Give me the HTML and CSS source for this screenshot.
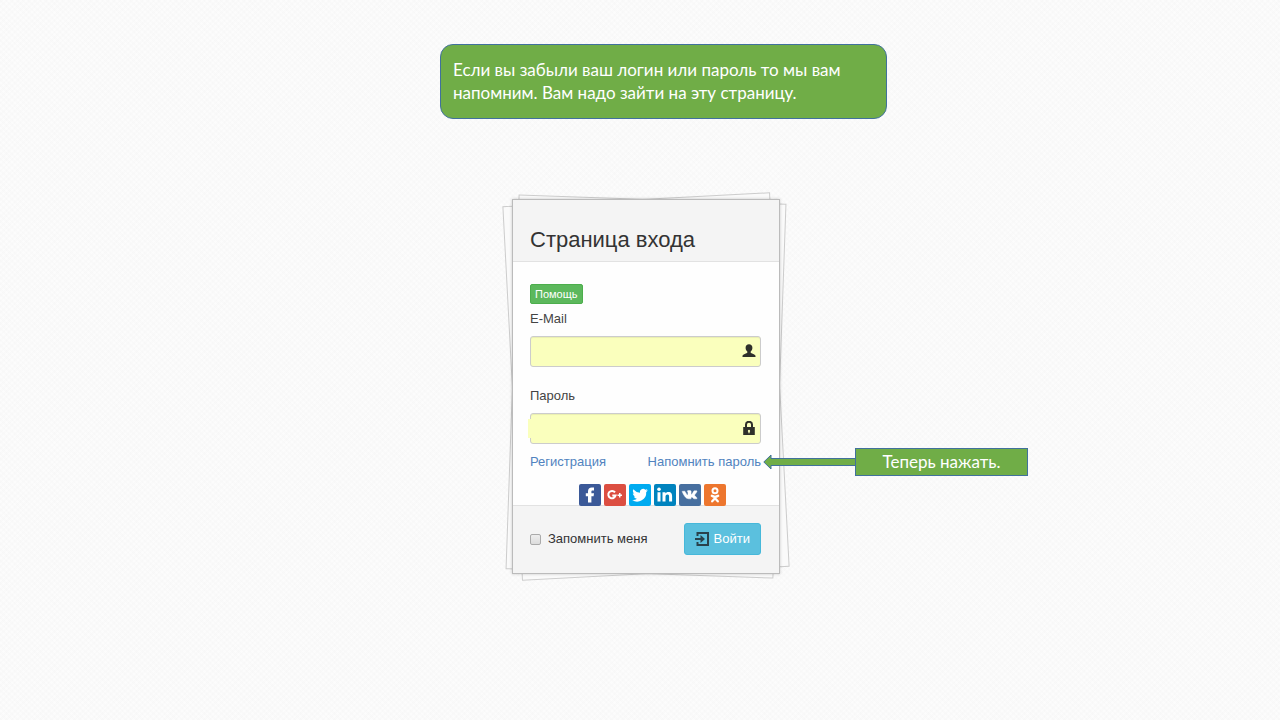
FILE: index.html
```html
<!DOCTYPE html>
<html lang="ru">
<head>
<meta charset="utf-8">
<meta name="viewport" content="width=device-width, initial-scale=1">
<title>Страница входа</title>
<link rel="stylesheet" href="styles.css">
</head>
<body>
<main class="page">
  <p class="note">Если вы забыли ваш логин или пароль то мы вам напомним. Вам надо зайти на эту страницу.</p>
  <div class="stack">
    <form class="card">
      <header class="card-header"><h1 class="title">Страница входа</h1></header>
      <div class="card-body">
        <button type="button" class="help">Помощь</button>
        <label class="label" for="email">E-Mail</label>
        <div class="field">
          <input class="input" id="email" type="email">
          <svg class="field-icon" viewBox="0 0 14 14"><path fill="#2f302b" d="M7 .3C4.900.3 3.600 1.600 3.600 3.700c0 1.600.7 3 1.700 3.700v1.400C4.900 9.700.9 10 .5 11.800V13h13v-1.200c-.4-1.800-4.400-2.100-4.800-3V7.400c1-.7 1.700-2.100 1.700-3.700C10.400 1.600 9.100.3 7 .3z"/></svg>
        </div>
        <label class="label" for="password">Пароль</label>
        <div class="field field-marked">
          <input class="input" id="password" type="password">
          <svg class="field-icon" viewBox="0 0 14 14"><path fill="none" stroke="#2f302b" stroke-width="2" d="M4 7V3.600a3 2.800 0 0 1 6 0V7"/><path fill="#2f302b" fill-rule="evenodd" d="M1.200 6h11.600v8H1.200zM7 8.800a1.200 1.200 0 0 0-.6 2.200v1.200h1.200V11A1.200 1.200 0 0 0 7 8.800z"/></svg>
        </div>
        <div class="links">
          <a class="link" href="#">Регистрация</a>
          <span class="remind">
            <a class="link" href="#">Напомнить пароль</a>
            <span class="pointer">
              <svg class="arrow" viewBox="0 0 93 16"><path fill="#70ad47" stroke="#41719c" d="M.8 8 8 1v3.500h85v7H8V15z"/></svg>
              <span class="hint">Теперь нажать.</span>
            </span>
          </span>
        </div>
        <nav class="social">
          <a class="social-link facebook" href="#" aria-label="Facebook"><svg class="social-icon" viewBox="0 0 22 22"><path fill="#fff" d="M9 18.500V12.200H6.800V9.200H9V7.300c0-2.500 1.400-3.900 3.800-3.900h2.200v3h-1.300c-1 0-1.300.4-1.300 1.200v1.600h2.600l-.4 3h-2.200v6.300z"/></svg></a>
          <a class="social-link google" href="#" aria-label="Google+"><svg class="social-icon" viewBox="0 0 22 22"><path fill="none" stroke="#fff" stroke-width="2" d="M11 8.400A3.700 3.700 0 1 0 11.600 11.600H8.300"/><path fill="#fff" d="M15 9h1.500v1.500H18V12h-1.500v1.500H15V12h-1.500v-1.500H15z"/></svg></a>
          <a class="social-link twitter" href="#" aria-label="Twitter"><svg class="social-icon" viewBox="0 0 24 24"><path fill="#fff" d="M20.500 6.800c-.6.300-1.300.5-2 .6.700-.4 1.300-1.100 1.500-1.900-.7.400-1.400.7-2.200.8A3.500 3.500 0 0 0 11.900 9.500 9.900 9.900 0 0 1 4.700 5.800c-.9 1.600-.5 3.600 1.100 4.700-.6 0-1.100-.2-1.600-.4 0 1.700 1.200 3.100 2.800 3.400-.5.100-1 .2-1.600.1.500 1.400 1.700 2.400 3.300 2.400A7 7 0 0 1 3.500 17.500 9.900 9.900 0 0 0 18.800 8.600c.7-.5 1.300-1.100 1.700-1.800z"/></svg></a>
          <a class="social-link linkedin" href="#" aria-label="LinkedIn"><svg class="social-icon" viewBox="0 0 22 22"><path fill="#fff" d="M3.500 8.300h3v9.200h-3zM8.500 8.300h2.900v1.300c.6-1 1.600-1.500 3-1.500 3 0 3.700 2 3.700 4.500v4.900h-3v-4.500c0-1.200-.1-2.400-1.600-2.400s-2 1.100-2 2.400v4.500h-3z"/><circle cx="5" cy="5.300" r="1.800" fill="#fff"/></svg></a>
          <a class="social-link vk" href="#" aria-label="ВКонтакте"><svg class="social-icon" viewBox="-3 -3 30 30"><path fill="#fff" stroke="#fff" stroke-width=".6" d="M11.500 17.200h1.300s.4 0 .6-.3c.2-.2.200-.5.200-.5s0-1.500.7-1.700 1.600 1.500 2.600 2.100c.7.500 1.300.4 1.300.4h2.500s1.300-.1.700-1.200c-.1-.1-.4-.8-2-2.300-1.700-1.500-1.500-1.300.6-4 1.200-1.700 1.700-2.700 1.600-3.100-.2-.4-1.100-.3-1.100-.3h-2.800s-.3 0-.5.200-.3.400-.3.400-.5 1.200-1.100 2.200c-1.200 2.100-1.700 2.200-1.900 2-.5-.3-.4-1.200-.4-1.900 0-2.100.3-2.900-.6-3.100-1.500-.4-3.800-.3-4.500.3-.4.200-.6.600-.4.600s.7.200.9.500c.3.500.3 1.500.3 1.500s.2 2.800-.4 3.100c-.4.200-1-.2-2.200-2.400-.6-1-1.100-2.200-1.100-2.200s-.1-.3-.3-.4c-.2-.2-.6-.2-.6-.2H1.900s-.4 0-.5.200c-.2.200 0 .5 0 .5s2.100 5 4.500 7.400c2.100 2.400 4.500 2.200 5.600 2.200z"/></svg></a>
          <a class="social-link odnoklassniki" href="#" aria-label="Одноклассники"><svg class="social-icon" viewBox="0 0 22 22"><circle cx="11" cy="6.800" r="2.500" fill="none" stroke="#fff" stroke-width="2"/><path fill="none" stroke="#fff" stroke-width="2.300" stroke-linecap="round" stroke-linejoin="round" d="M7.800 11.800c2.100 1.300 4.300 1.300 6.400 0M8.200 17.300l2.800-3 2.800 3M11 13v1"/></svg></a>
        </nav>
      </div>
      <footer class="card-footer">
        <label class="remember"><input class="tick" type="checkbox">Запомнить меня</label>
        <button type="button" class="submit">
          <svg class="submit-icon" viewBox="0 0 14 14"><path fill="none" stroke="#29424c" stroke-width="2" d="M2.500 4V1H13v12H2.500v-3M0 7h7"/><path fill="#29424c" d="M5.500 3 10 7l-4.500 4z"/></svg>Войти
        </button>
      </footer>
    </form>
  </div>
</main>
</body>
</html>
```
FILE: styles.css
```css
* { box-sizing: border-box; }

body {
  margin: 0;
  min-height: 100vh;
  background-color: #fcfcfc;
  background-image:
    repeating-linear-gradient(45deg, #f3f3f340 0 2px, transparent 2px 4px),
    repeating-linear-gradient(-45deg, #f3f3f340 0 2px, transparent 2px 4px);
  color: #333;
  font: 13px/18px "Liberation Sans", Arial, sans-serif;
}

.page {
  display: flex;
  flex-direction: column;
  align-items: center;
  gap: 80px;
  padding: 44px 0 40px 12px;
}

.note {
  width: 447px;
  max-width: 100%;
  margin: 0 0 0 35px;
  padding: 13px 12px 14px;
  border: 1px solid #41719c;
  border-radius: 13px;
  background: #70ad47;
  color: #fff;
  font: 17px/23px Lato, "Open Sans", sans-serif;
}

.stack {
  position: relative;
  width: 268px;
}

.stack::before,
.stack::after {
  content: "";
  position: absolute;
  inset: 0;
  border: 1px solid #ccc;
  background: #fafafa;
}

.stack::before { transform: rotate(-3deg); }
.stack::after { transform: rotate(2deg); }

.card {
  position: relative;
  z-index: 1;
  border: 1px solid #bbb;
  background: #fefefe;
  box-shadow: 0 0 3px #0003;
}

.card-header {
  padding: 26px 17px 7px;
  border-bottom: 1px solid #e2e2e2;
  background: #f4f4f4;
}

.title {
  margin: 0;
  font-size: 22px;
  font-weight: 400;
  line-height: 28px;
}

.card-body {
  display: flex;
  flex-direction: column;
  padding: 22px 18px 0 17px;
}

.help {
  align-self: flex-start;
  height: 20px;
  margin-bottom: 6px;
  padding: 0 4px;
  border: 1px solid #4cae4c;
  border-radius: 2px;
  background: #5cb85c;
  color: #fff;
  font: 11px/16px "Liberation Sans", Arial, sans-serif;
}

.label {
  margin-bottom: 8px;
  color: #444;
}

.field {
  position: relative;
  height: 31px;
  margin-bottom: 20px;
}

.field-marked { margin-bottom: 9px; }

.field-marked::before {
  content: "";
  position: absolute;
  inset: 6px auto 6px -2px;
  width: 6px;
  background: #faffbd;
}

.input {
  width: 100%;
  height: 100%;
  padding: 0 28px 0 8px;
  border: 1px solid #ccc;
  border-radius: 3px;
  background: #faffbd;
  box-shadow: inset 0 1px 1px #0001;
}

.field-icon {
  position: absolute;
  top: 8px;
  right: 5px;
  width: 14px;
  height: 14px;
}

.links {
  display: flex;
  justify-content: space-between;
}

.link {
  color: #5183bf;
  text-decoration: none;
}

.remind { position: relative; }

.pointer {
  position: absolute;
  top: -5px;
  left: calc(100% + 2px);
  display: flex;
  align-items: center;
}

.arrow {
  flex: none;
  width: 93px;
  height: 16px;
}

.hint {
  width: 173px;
  margin-left: -1px;
  border: 1px solid #41719c;
  background: #70ad47;
  color: #fff;
  font: 17px/26px Lato, "Open Sans", sans-serif;
  text-align: center;
  white-space: nowrap;
}

.social {
  position: relative;
  display: flex;
  justify-content: center;
  gap: 3px;
  margin: 13px 0 -1px;
  padding-left: 14px;
}

.social-link {
  width: 22px;
  height: 22px;
  border-radius: 2px;
}

.social-icon {
  display: block;
  width: 22px;
  height: 22px;
}

.facebook { background: #3b5998; }
.google { background: #dc4e41; }
.twitter { background: #00abf0; }
.linkedin { background: #0083be; }
.vk { background: #476f9f; }
.odnoklassniki { background: #ed762e; }

.card-footer {
  display: flex;
  align-items: center;
  justify-content: space-between;
  padding: 17px 18px 18px 17px;
  border-top: 1px solid #e2e2e2;
  background: #f4f4f4;
}

.remember {
  display: flex;
  align-items: center;
  gap: 7px;
}

.tick {
  appearance: none;
  width: 11px;
  height: 11px;
  margin: 0;
  border: 1px solid #aaa;
  border-radius: 2px;
  background: linear-gradient(#eee, #dcdcdc);
}

.tick:checked { background: #5183bf; }

.submit {
  display: flex;
  align-items: center;
  gap: 5px;
  height: 32px;
  padding: 0 10px;
  border: 1px solid #46b8da;
  border-radius: 3px;
  background: #5bc0de;
  color: #fff;
  font: 13px/18px "Liberation Sans", Arial, sans-serif;
}

.submit-icon {
  width: 14px;
  height: 14px;
}
```
